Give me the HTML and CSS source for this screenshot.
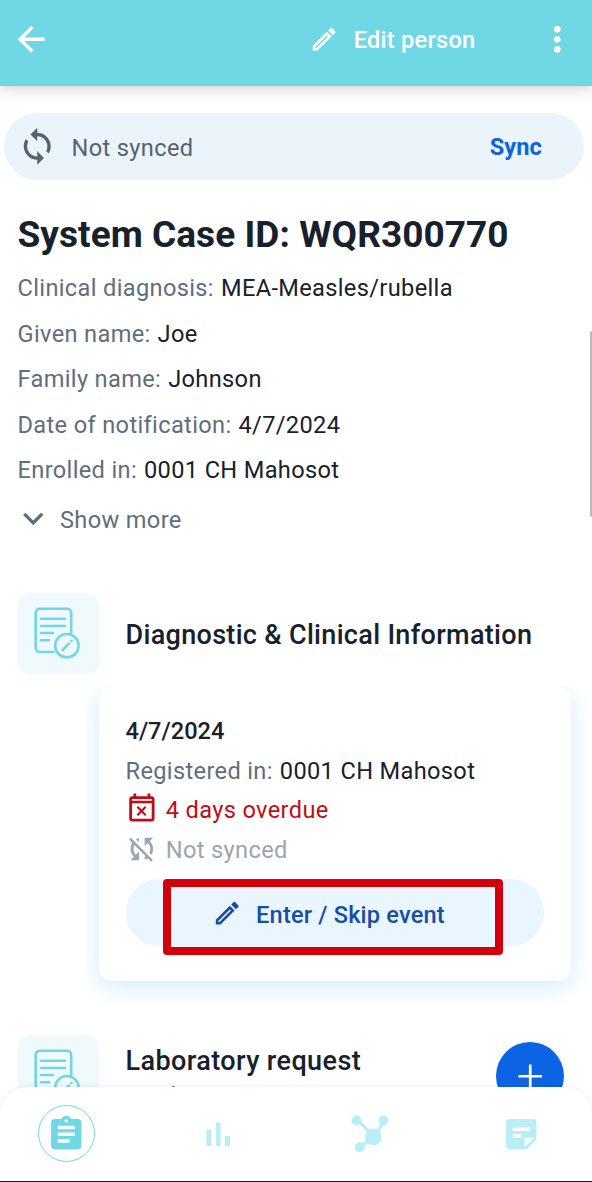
FILE: index.html
```html
<!DOCTYPE html>
<html lang="en">
<head>
<meta charset="utf-8">
<title>Edit person</title>
<link rel="stylesheet" href="styles.css">
</head>
<body>
<svg class="defs" aria-hidden="true">
  <symbol id="pencil" viewBox="0 0 24 24"><path fill="currentColor" d="M14.06 9.02l.92.92L5.92 19H5v-.92l9.06-9.06M17.66 3c-.25 0-.51.1-.7.29l-1.83 1.83 3.75 3.75 1.83-1.83c.39-.39.39-1.02 0-1.41l-2.34-2.34c-.2-.2-.45-.29-.71-.29zm-3.6 3.19L3 17.25V21h3.75L17.81 9.94l-3.75-3.75z"/></symbol>
  <symbol id="form" viewBox="0 0 54 54"><g fill="none" stroke="currentColor" stroke-width="2.600" stroke-linecap="round"><path d="M22.500 46H8.700a4 4 0 0 1-4-4V6.800a4 4 0 0 1 4-4h27.500a4 4 0 0 1 4 4V27"/><path d="M10 12.800h24M10 20h24M10 27h12M10 34.200h8"/><circle cx="35.900" cy="39.700" r="11.700"/><path d="M31.700 44l6.200-6.400M40.300 35.200l.2-.2"/></g></symbol>
</svg>
<div class="screen">
  <header class="topbar">
    <svg class="icon" viewBox="0 0 24 24"><path fill="currentColor" d="M20 11H7.830l5.590-5.590L12 4l-8 8 8 8 1.410-1.410L7.830 13H20v-2z"/></svg>
    <div class="edit"><svg class="small"><use href="#pencil"/></svg><span>Edit person</span></div>
    <svg class="icon" viewBox="0 0 24 24"><path fill="currentColor" d="M12 8c1.100 0 2-.9 2-2s-.9-2-2-2-2 .9-2 2 .9 2 2 2zm0 2c-1.100 0-2 .9-2 2s.9 2 2 2 2-.9 2-2-.9-2-2-2zm0 6c-1.100 0-2 .9-2 2s.9 2 2 2 2-.9 2-2-.9-2-2-2z"/></svg>
  </header>
  <main class="content">
    <div class="syncbar">
      <svg class="icon" viewBox="0 0 24 24"><path fill="currentColor" d="M12 4V1L8 5l4 4V6c3.310 0 6 2.690 6 6 0 1.010-.25 1.970-.7 2.800l1.460 1.460C19.540 15.030 20 13.570 20 12c0-4.420-3.580-8-8-8zm0 14c-3.310 0-6-2.690-6-6 0-1.010.25-1.970.7-2.800L5.240 7.740C4.460 8.970 4 10.430 4 12c0 4.420 3.580 8 8 8v3l4-4-4-4v3z"/></svg>
      <span class="sync-text">Not synced</span>
      <span class="sync-action">Sync</span>
    </div>
    <h1 class="title">System Case ID: WQR300770</h1>
    <dl class="fields">
      <div><dt>Clinical diagnosis:</dt><dd>MEA-Measles/rubella</dd></div>
      <div><dt>Given name:</dt><dd>Joe</dd></div>
      <div><dt>Family name:</dt><dd>Johnson</dd></div>
      <div><dt>Date of notification:</dt><dd>4/7/2024</dd></div>
      <div><dt>Enrolled in:</dt><dd>0001 CH Mahosot</dd></div>
    </dl>
    <div class="more"><svg class="icon" viewBox="0 0 24 24"><path fill="currentColor" d="M7.410 8.090 12 12.670l4.590-4.580L18 9.500l-6 6-6-6 1.410-1.410z"/></svg><span>Show more</span></div>
    <section class="stage">
      <div class="tile"><svg><use href="#form"/></svg></div>
      <h2>Diagnostic &amp; Clinical Information</h2>
    </section>
    <div class="card-wrap">
      <article class="card">
        <div class="date">4/7/2024</div>
        <div class="row"><span class="muted">Registered in:</span><span>0001 CH Mahosot</span></div>
        <div class="row overdue"><svg class="status" viewBox="0 0 24 24"><path fill="currentColor" d="M9.310 17l2.440-2.440L14.190 17l1.060-1.060-2.440-2.440 2.440-2.440L14.190 10l-2.440 2.440L9.310 10l-1.060 1.060 2.440 2.440-2.440 2.440L9.310 17zM19 3h-1V1h-2v2H8V1H6v2H5c-1.110 0-1.990.9-1.990 2L3 19c0 1.100.89 2 2 2h14c1.100 0 2-.9 2-2V5c0-1.100-.9-2-2-2zm0 16H5V8h14v11z M5 5h14v1.300H5z" fill-rule="evenodd"/></svg><span>4 days overdue</span></div>
        <div class="row unsynced"><svg class="status" viewBox="0 0 24 24"><path fill="currentColor" d="M10 6.350V4.260c-.8.210-1.550.54-2.230.96l1.460 1.460c.25-.12.5-.24.77-.33zm-7.140-.94l2.360 2.360C4.450 8.990 4 10.440 4 12c0 2.210.91 4.200 2.360 5.640L4 20h6v-6l-2.240 2.240C6.680 15.150 6 13.660 6 12c0-1 .25-1.940.68-2.770l8.080 8.080c-.25.13-.5.25-.77.34v2.090c.8-.21 1.550-.54 2.230-.96l2.360 2.360 1.270-1.270L4.140 4.140 2.860 5.410zM20 4h-6v6l2.240-2.240C17.320 8.850 18 10.340 18 12c0 1-.25 1.940-.68 2.770l1.460 1.460C19.550 15.010 20 13.560 20 12c0-2.210-.91-4.200-2.360-5.640L20 4z"/></svg><span>Not synced</span></div>
        <div class="button"><svg class="small"><use href="#pencil"/></svg><span>Enter / Skip event</span><i class="highlight"></i></div>
      </article>
    </div>
    <section class="stage lab">
      <div class="tile"><svg><use href="#form"/></svg></div>
      <div class="lab-text"><h2>Laboratory request</h2><p>No data</p></div>
      <div class="add"><svg viewBox="0 0 24 24"><path fill="currentColor" d="M19 12.800h-6.200V19h-1.600v-6.200H5v-1.600h6.200V5h1.600v6.200H19z"/></svg></div>
    </section>
  </main>
  <i class="scrollbar"></i>
  <nav class="nav">
    <span class="tab active"><svg viewBox="0 0 24 24"><path fill="currentColor" d="M19 3h-4.180C14.400 1.840 13.300 1 12 1c-1.300 0-2.400.84-2.820 2H5c-1.100 0-2 .9-2 2v14c0 1.100.9 2 2 2h14c1.100 0 2-.9 2-2V5c0-1.100-.9-2-2-2zm-7 0c.55 0 1 .45 1 1s-.45 1-1 1-1-.45-1-1 .45-1 1-1zm2 14H7v-2h7v2zm3-4H7v-2h10v2zm0-4H7V7h10v2z"/></svg></span>
    <span class="tab"><svg viewBox="0 0 24 24"><path fill="currentColor" d="M5 9.200h3V19H5zM10.600 5h2.800v14h-2.800zM16 13h3v6h-3z"/></svg></span>
    <span class="tab"><svg viewBox="0 0 24 24"><g fill="currentColor" transform="translate(1.600 0)"><path d="M2 4l1.300-1.300 7.700 7.700-1.400 1.400zM17.800 3.500l1.600.9-4.300 7.500-1.700-1zM4 19.300l6-5.700 1.300 1.400-6 5.700z"/><circle cx="2.200" cy="3.800" r="2.950"/><circle cx="18.200" cy="3.800" r="2.950"/><circle cx="12.200" cy="13.700" r="5"/><circle cx="4.200" cy="19.700" r="2.950"/></g></svg></span>
    <span class="tab"><svg viewBox="0 0 24 24"><path fill="currentColor" d="M19 3H4.990C3.890 3 3 3.900 3 5l.01 14c0 1.100.89 2 1.990 2h10l6-6V5c0-1.100-.9-2-2-2zM7 8h10v2H7V8zm5 6H7v-2h5v2zm2 5.500V14h5.500L14 19.500z"/></svg></span>
  </nav>
</div>
</body>
</html>
```
FILE: styles.css
```css
* { box-sizing: border-box; }
body { margin: 0; font-family: Roboto, sans-serif; font-size: 23.6px; letter-spacing: 0.35px; color: #17212b; background: #fff; }
h1, h2, p, dl, dd { margin: 0; }
svg { display: block; flex: none; overflow: visible; }
.defs { position: absolute; width: 0; height: 0; }
.screen { position: relative; display: flex; flex-direction: column; height: 1182px; overflow: hidden; border-bottom: 1px solid #15161a; }
.icon { width: 40.5px; height: 40.5px; }
.small { width: 30.4px; height: 30.4px; }
.status { width: 33.75px; height: 33.75px; }

.topbar { position: relative; z-index: 1; flex: none; display: flex; align-items: center; height: 86px; padding: 0 15px 8px 11px; color: #fff; background: #70d8e5; box-shadow: 0 3px 14px rgba(0,0,0,.16), 0 1px 3px rgba(0,0,0,.05); }
.edit { display: flex; align-items: center; gap: 14px; margin: 1px 61px 0 auto; font-weight: 500; letter-spacing: 0.25px; }
.edit span { padding-top: 2px; }

.content { flex: 1; min-height: 0; overflow: hidden; padding-top: 27px; }
.syncbar { display: flex; align-items: center; height: 67px; margin: 0 8px 0 4px; padding: 0 42px 0 13px; border-radius: 34px; background: #ebf3fb; color: #56646f; }
.sync-text { margin: 3px 0 0 14px; }
.sync-action { margin-left: auto; font-weight: 700; letter-spacing: 0.1px; color: #0c63e4; }
.title { margin: 32px 0 0 17.500px; font-size: 37px; line-height: 46px; font-weight: 700; letter-spacing: 0.05px; }
.fields { margin: 8px 0 0 17.500px; }
.fields div { display: flex; gap: 7px; line-height: 45.600px; }
.fields dt, .muted { color: #5f6e7d; }
.more { display: flex; align-items: center; gap: 7px; height: 36px; margin: 8px 0 0 12.500px; color: #5f6e7d; }
.more svg { margin-top: -2px; }

.stage { display: flex; align-items: center; gap: 27px; margin: 55px 0 0 18px; }
.stage h2 { padding-top: 3px; font-size: 27px; line-height: 34px; font-weight: 500; letter-spacing: 0.32px; }
.tile { display: grid; place-items: center; width: 80.500px; height: 81px; border-radius: 13px; background: #f0fafd; color: #70d8e5; }
.tile svg { width: 54px; height: 54px; }

.card-wrap { margin-top: 13px; height: 330px; overflow: hidden; }
.card { width: 472.500px; height: 294px; margin-left: 98.500px; padding: 25.500px 27px 33px; border-radius: 13px; background: #fff; box-shadow: 0 6px 24px #d5ebfc; }
.date { font-weight: 500; line-height: 39px; letter-spacing: 0; }
.row { display: flex; align-items: center; gap: 7px; height: 39px; }
.row svg { margin: -2px 0 0 -0.5px; }
.overdue { color: #bf0d15; }
.unsynced { height: 41px; color: #99a6b2; }
.button { position: relative; display: flex; align-items: center; justify-content: center; gap: 14px; height: 67px; margin-top: 9px; padding: 1px 13px 0 0; border-radius: 34px; background: #eaf6ff; color: #154da7; font-weight: 500; letter-spacing: 0.17px; }
.button span { padding-top: 3px; }
.highlight { position: absolute; left: 37px; top: 0; width: 340px; height: 75.500px; border: 8px solid #d2000c; border-radius: 4px; }

.lab { align-items: flex-start; margin-top: 18px; }
.lab-text { padding-top: 6px; line-height: 35px; color: #5f6e7d; }
.lab p { padding-top: 1px; }
.lab h2 { color: #17212b; letter-spacing: 0.4px; }
.add { display: grid; place-items: center; width: 68px; height: 68px; margin: 7px 28px 0 auto; border-radius: 50%; background: #0c63e4; color: #fff; }
.add svg { width: 40.500px; height: 40.500px; }
.scrollbar { position: absolute; right: 0; top: 331px; width: 2px; height: 186px; border-radius: 2px 0 0 2px; background: #b8b8b8; }

.nav { position: absolute; left: 0; right: 0; bottom: 0; display: flex; align-items: center; justify-content: space-between; height: 94px; padding: 0 42px 1px 38px; border-radius: 27px 27px 0 0; background: #fff; box-shadow: 0 -1px 4px rgba(0,0,0,.07); }
.tab { display: grid; place-items: center; width: 57px; height: 57px; color: #b9eef4; }
.tab svg { width: 40.500px; height: 40.500px; margin-top: 2px; }
.active { color: #70d8e5; border: 1.500px solid #70d8e5; border-radius: 50%; }
```
